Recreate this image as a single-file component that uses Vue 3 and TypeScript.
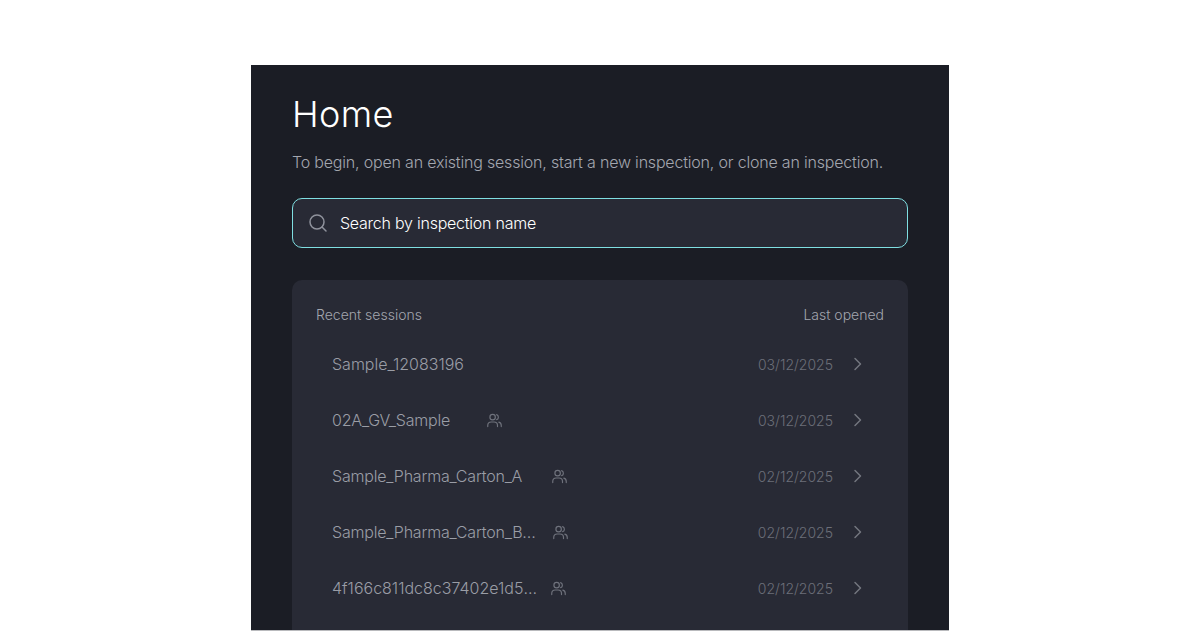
<script setup lang="ts">
interface Session {
  name: string
  date: string
  shared: boolean
  nameWidth?: number
  numeric?: boolean
}

const sessions: Session[] = [
  { name: 'Sample_12083196', date: '03/12/2025', shared: false, numeric: true },
  { name: '02A_GV_Sample', date: '03/12/2025', shared: true, nameWidth: 155 },
  { name: 'Sample_Pharma_Carton_A', date: '02/12/2025', shared: true, nameWidth: 220 },
  { name: 'Sample_Pharma_Carton_B_Long_Name', date: '02/12/2025', shared: true, nameWidth: 221 },
  { name: '4f166c811dc8c37402e1d5a9c07b3e', date: '02/12/2025', shared: true, nameWidth: 219, numeric: true },
]
</script>

<template>
  <div class="page">
    <main class="panel">
      <h1 class="title">Home</h1>
      <p class="intro">To begin, open an existing session, start a new inspection, or clone an inspection.</p>

      <label class="search">
        <svg class="search-icon" width="20" height="20" viewBox="0 0 20 20" fill="none">
          <circle cx="8" cy="9" r="7" />
          <path d="M13 14 17 18" />
        </svg>
        <span class="search-text">Search by inspection name</span>
      </label>

      <section class="card">
        <div class="card-head">
          <span>Recent sessions</span>
          <span>Last opened</span>
        </div>
        <div class="rows">
          <div v-for="s in sessions" :key="s.name" class="row">
            <div class="row-left">
              <span
                class="name"
                :class="{ numeric: s.numeric }"
                :style="s.nameWidth ? { width: s.nameWidth + 'px' } : undefined"
              >{{ s.name }}</span>
              <svg v-if="s.shared" class="users" width="15" height="15" viewBox="0 0 16 16" fill="none">
                <circle cx="6" cy="4.4" r="2.9" />
                <path d="M.8 14.5v-1.2c0-2.1 1.6-3.7 3.7-3.7h3c2.1 0 3.7 1.6 3.7 3.7v1.2" />
                <path d="M10.3 1.7a2.9 2.9 0 0 1 0 5.4" />
                <path d="M12.6 9.8c1.5.4 2.6 1.8 2.6 3.5v1.2" />
              </svg>
            </div>
            <span class="date">{{ s.date }}</span>
            <svg class="chevron" width="16" height="16" viewBox="0 0 16 16" fill="none">
              <path d="m5 2.5 5.5 5.5L5 13.5" />
            </svg>
          </div>
        </div>
      </section>
    </main>
  </div>
</template>

<style>
html,
body {
  margin: 0;
  background: #fff;
  overflow: hidden;
}
</style>

<style scoped>
.page {
  width: 1200px;
  height: 631px;
  padding-top: 65px;
  box-sizing: border-box;
  display: flex;
  justify-content: center;
  overflow: hidden;
  font-family: Inter, "Liberation Sans", sans-serif;
}

.panel {
  width: 698px;
  height: 566px;
  box-sizing: border-box;
  padding: 0 41px;
  background: #1b1d25;
  border-bottom: 1px solid #b9babd;
  overflow: hidden;
}

.title {
  margin: 25px 0 0;
  font-size: 36px;
  line-height: 48px;
  font-weight: 300;
  color: #fff;
  letter-spacing: 0.4px;
}

.intro {
  margin: 13px 0 0;
  font-size: 16px;
  line-height: 22px;
  font-weight: 300;
  letter-spacing: -0.19px;
  color: #a3a6af;
  white-space: nowrap;
}

.search {
  margin-top: 25px;
  height: 50px;
  box-sizing: border-box;
  display: flex;
  align-items: center;
  gap: 11px;
  padding: 0 16px;
  background: #282a35;
  border: 1px solid #7fdfe2;
  border-radius: 10px;
}

.search-icon {
  stroke: #8f929c;
  stroke-width: 1.5;
  stroke-linecap: round;
}

.search-text {
  font-size: 16px;
  font-weight: 300;
  letter-spacing: -0.24px;
  color: #fff;
}

.card {
  margin-top: 32px;
  background: #282a35;
  border-radius: 10px;
  padding: 24px 24px 24px;
}

.card-head {
  display: flex;
  justify-content: space-between;
  font-size: 14px;
  line-height: 22px;
  font-weight: 300;
  color: #a3a6af;
}

.rows {
  margin-top: 10px;
}

.row {
  height: 56px;
  display: flex;
  align-items: center;
  padding-left: 16px;
}

.row-left {
  flex: 1;
  min-width: 0;
  display: flex;
  align-items: center;
}

.name {
  box-sizing: border-box;
  padding-right: 12px;
  overflow: hidden;
  text-overflow: ellipsis;
  white-space: nowrap;
  font-size: 16px;
  font-weight: 300;
  letter-spacing: -0.2px;
  color: #9a9da6;
}

.name.numeric {
  letter-spacing: 0;
}

.users {
  stroke: #6f727c;
  stroke-width: 1.25;
  stroke-linecap: round;
}

.date {
  font-size: 14px;
  font-weight: 300;
  color: #6c6f79;
  margin-right: 17px;
}

.chevron {
  stroke: #73767f;
  stroke-width: 1.5;
  stroke-linecap: round;
  stroke-linejoin: round;
  margin-right: 18px;
}
</style>
